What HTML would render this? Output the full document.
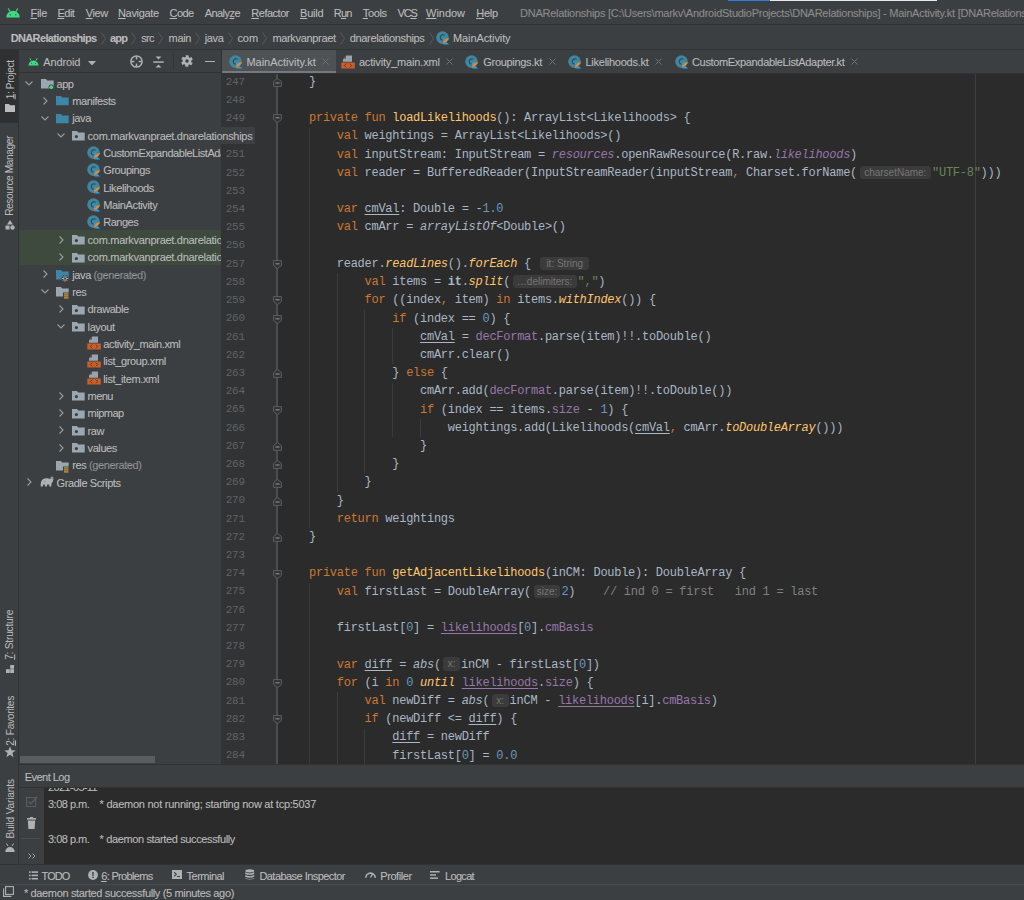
<!DOCTYPE html><html><head><meta charset="utf-8"><style>html,body{margin:0;padding:0;background:#3c3f41;overflow:hidden}u{text-decoration-thickness:1px}</style></head><body>
<div style="position:absolute;left:0;top:0;width:1024px;height:900px;background:#3c3f41;overflow:hidden">
<div style="position:absolute;left:0px;top:24px;width:1024px;height:1px;background:#323232;"></div>
<div style="position:absolute;left:728px;top:0px;width:42px;height:1px;background:#2f7bd8;"></div>
<div style="position:absolute;left:770px;top:0px;width:167px;height:1px;background:#e8e8e8;"></div>
<svg style="position:absolute;left:5px;top:8px" width="16" height="10" viewBox="0 0 16 10"><path d="M1.2 9.5 A6.8 6.8 0 0 1 14.8 9.5 Z" fill="#3ddc84"/><line x1="3.2" y1="0.5" x2="5" y2="3.5" stroke="#3ddc84" stroke-width="1.2"/><line x1="12.8" y1="0.5" x2="11" y2="3.5" stroke="#3ddc84" stroke-width="1.2"/><circle cx="5.2" cy="6.8" r="0.8" fill="#2f6e4d"/><circle cx="10.8" cy="6.8" r="0.8" fill="#2f6e4d"/></svg>
<div style="position:absolute;left:30.50px;top:6.65px;font-family:'Liberation Sans',sans-serif;font-size:11.0px;line-height:12.64px;color:#bbbbbb;white-space:pre;letter-spacing:-0.306px;-webkit-text-stroke:0.1px #bbbbbb;"><u style="text-underline-offset:0.8px">F</u>ile</div>
<div style="position:absolute;left:57.40px;top:6.65px;font-family:'Liberation Sans',sans-serif;font-size:11.0px;line-height:12.64px;color:#bbbbbb;white-space:pre;letter-spacing:-0.489px;-webkit-text-stroke:0.1px #bbbbbb;"><u style="text-underline-offset:0.8px">E</u>dit</div>
<div style="position:absolute;left:85.80px;top:6.65px;font-family:'Liberation Sans',sans-serif;font-size:11.0px;line-height:12.64px;color:#bbbbbb;white-space:pre;letter-spacing:-0.386px;-webkit-text-stroke:0.1px #bbbbbb;"><u style="text-underline-offset:0.8px">V</u>iew</div>
<div style="position:absolute;left:118.00px;top:6.65px;font-family:'Liberation Sans',sans-serif;font-size:11.0px;line-height:12.64px;color:#bbbbbb;white-space:pre;letter-spacing:-0.339px;-webkit-text-stroke:0.1px #bbbbbb;"><u style="text-underline-offset:0.8px">N</u>avigate</div>
<div style="position:absolute;left:169.60px;top:6.65px;font-family:'Liberation Sans',sans-serif;font-size:11.0px;line-height:12.64px;color:#bbbbbb;white-space:pre;letter-spacing:-0.599px;-webkit-text-stroke:0.1px #bbbbbb;"><u style="text-underline-offset:0.8px">C</u>ode</div>
<div style="position:absolute;left:204.70px;top:6.65px;font-family:'Liberation Sans',sans-serif;font-size:11.0px;line-height:12.64px;color:#bbbbbb;white-space:pre;letter-spacing:-0.548px;-webkit-text-stroke:0.1px #bbbbbb;">Analy<u style="text-underline-offset:0.8px">z</u>e</div>
<div style="position:absolute;left:251.30px;top:6.65px;font-family:'Liberation Sans',sans-serif;font-size:11.0px;line-height:12.64px;color:#bbbbbb;white-space:pre;letter-spacing:-0.484px;-webkit-text-stroke:0.1px #bbbbbb;"><u style="text-underline-offset:0.8px">R</u>efactor</div>
<div style="position:absolute;left:300.10px;top:6.65px;font-family:'Liberation Sans',sans-serif;font-size:11.0px;line-height:12.64px;color:#bbbbbb;white-space:pre;letter-spacing:-0.252px;-webkit-text-stroke:0.1px #bbbbbb;"><u style="text-underline-offset:0.8px">B</u>uild</div>
<div style="position:absolute;left:333.80px;top:6.65px;font-family:'Liberation Sans',sans-serif;font-size:11.0px;line-height:12.64px;color:#bbbbbb;white-space:pre;letter-spacing:-0.827px;-webkit-text-stroke:0.1px #bbbbbb;">R<u style="text-underline-offset:0.8px">u</u>n</div>
<div style="position:absolute;left:362.80px;top:6.65px;font-family:'Liberation Sans',sans-serif;font-size:11.0px;line-height:12.64px;color:#bbbbbb;white-space:pre;letter-spacing:-0.376px;-webkit-text-stroke:0.1px #bbbbbb;"><u style="text-underline-offset:0.8px">T</u>ools</div>
<div style="position:absolute;left:397.60px;top:6.65px;font-family:'Liberation Sans',sans-serif;font-size:11.0px;line-height:12.64px;color:#bbbbbb;white-space:pre;letter-spacing:-1.206px;-webkit-text-stroke:0.1px #bbbbbb;">VC<u style="text-underline-offset:0.8px">S</u></div>
<div style="position:absolute;left:426.10px;top:6.65px;font-family:'Liberation Sans',sans-serif;font-size:11.0px;line-height:12.64px;color:#bbbbbb;white-space:pre;letter-spacing:-0.054px;-webkit-text-stroke:0.1px #bbbbbb;"><u style="text-underline-offset:0.8px">W</u>indow</div>
<div style="position:absolute;left:476.20px;top:6.65px;font-family:'Liberation Sans',sans-serif;font-size:11.0px;line-height:12.64px;color:#bbbbbb;white-space:pre;letter-spacing:-0.256px;-webkit-text-stroke:0.1px #bbbbbb;"><u style="text-underline-offset:0.8px">H</u>elp</div>
<div style="position:absolute;left:520.00px;top:6.65px;font-family:'Liberation Sans',sans-serif;font-size:11.0px;line-height:12.64px;color:#8c8c8c;white-space:pre;letter-spacing:-0.253px;-webkit-text-stroke:0.1px #8c8c8c;">DNARelationships [C:\Users\markv\AndroidStudioProjects\DNARelationships] - MainActivity.kt [DNARelationships.app]</div>
<div style="position:absolute;left:0px;top:49px;width:1024px;height:1px;background:#323232;"></div>
<div style="position:absolute;left:10.70px;top:31.75px;font-family:'Liberation Sans',sans-serif;font-size:11.0px;line-height:12.64px;color:#bbbbbb;font-weight:bold;white-space:pre;letter-spacing:-0.635px;-webkit-text-stroke:0.1px #bbbbbb;">DNARelationships</div>
<svg style="position:absolute;left:100.5px;top:31.5px" width="6" height="13" viewBox="0 0 6 13"><path d="M0.5 0.5 L4.5 6.5 L0.5 12.5" fill="none" stroke="#57595b" stroke-width="1"/></svg>
<div style="position:absolute;left:110.00px;top:31.75px;font-family:'Liberation Sans',sans-serif;font-size:11.0px;line-height:12.64px;color:#bbbbbb;font-weight:bold;white-space:pre;letter-spacing:-0.852px;-webkit-text-stroke:0.1px #bbbbbb;">app</div>
<svg style="position:absolute;left:131.0px;top:31.5px" width="6" height="13" viewBox="0 0 6 13"><path d="M0.5 0.5 L4.5 6.5 L0.5 12.5" fill="none" stroke="#57595b" stroke-width="1"/></svg>
<div style="position:absolute;left:141.20px;top:31.75px;font-family:'Liberation Sans',sans-serif;font-size:11.0px;line-height:12.64px;color:#bbbbbb;white-space:pre;letter-spacing:-0.655px;-webkit-text-stroke:0.1px #bbbbbb;">src</div>
<svg style="position:absolute;left:157.9px;top:31.5px" width="6" height="13" viewBox="0 0 6 13"><path d="M0.5 0.5 L4.5 6.5 L0.5 12.5" fill="none" stroke="#57595b" stroke-width="1"/></svg>
<div style="position:absolute;left:168.60px;top:31.75px;font-family:'Liberation Sans',sans-serif;font-size:11.0px;line-height:12.64px;color:#bbbbbb;white-space:pre;letter-spacing:-0.361px;-webkit-text-stroke:0.1px #bbbbbb;">main</div>
<svg style="position:absolute;left:195.0px;top:31.5px" width="6" height="13" viewBox="0 0 6 13"><path d="M0.5 0.5 L4.5 6.5 L0.5 12.5" fill="none" stroke="#57595b" stroke-width="1"/></svg>
<div style="position:absolute;left:204.70px;top:31.75px;font-family:'Liberation Sans',sans-serif;font-size:11.0px;line-height:12.64px;color:#bbbbbb;white-space:pre;letter-spacing:-0.345px;-webkit-text-stroke:0.1px #bbbbbb;">java</div>
<svg style="position:absolute;left:227.5px;top:31.5px" width="6" height="13" viewBox="0 0 6 13"><path d="M0.5 0.5 L4.5 6.5 L0.5 12.5" fill="none" stroke="#57595b" stroke-width="1"/></svg>
<div style="position:absolute;left:237.40px;top:31.75px;font-family:'Liberation Sans',sans-serif;font-size:11.0px;line-height:12.64px;color:#bbbbbb;white-space:pre;letter-spacing:-0.060px;-webkit-text-stroke:0.1px #bbbbbb;">com</div>
<svg style="position:absolute;left:262.0px;top:31.5px" width="6" height="13" viewBox="0 0 6 13"><path d="M0.5 0.5 L4.5 6.5 L0.5 12.5" fill="none" stroke="#57595b" stroke-width="1"/></svg>
<div style="position:absolute;left:272.40px;top:31.75px;font-family:'Liberation Sans',sans-serif;font-size:11.0px;line-height:12.64px;color:#bbbbbb;white-space:pre;letter-spacing:-0.329px;-webkit-text-stroke:0.1px #bbbbbb;">markvanpraet</div>
<svg style="position:absolute;left:339.7px;top:31.5px" width="6" height="13" viewBox="0 0 6 13"><path d="M0.5 0.5 L4.5 6.5 L0.5 12.5" fill="none" stroke="#57595b" stroke-width="1"/></svg>
<div style="position:absolute;left:349.70px;top:31.75px;font-family:'Liberation Sans',sans-serif;font-size:11.0px;line-height:12.64px;color:#bbbbbb;white-space:pre;letter-spacing:-0.332px;-webkit-text-stroke:0.1px #bbbbbb;">dnarelationships</div>
<svg style="position:absolute;left:428.5px;top:31.5px" width="6" height="13" viewBox="0 0 6 13"><path d="M0.5 0.5 L4.5 6.5 L0.5 12.5" fill="none" stroke="#57595b" stroke-width="1"/></svg>
<svg style="position:absolute;left:436.2px;top:31.0px" width="14" height="14" viewBox="0 0 14 14"><circle cx="6.5" cy="6.6" r="6.3" fill="#40869f"/><path d="M8.6 4.4 A2.7 2.7 0 1 0 6.6 9.2" fill="none" stroke="#2c4a57" stroke-width="1.1"/><path d="M7 14 L7 7.2 L14 7.2 L14 14 Z" fill="#3c3f41" opacity="0"/><path d="M7.2 7.6 L9.6 7.6 L7.2 10 Z" fill="#1fa8f2"/><path d="M7.2 13.6 L7.2 10.6 L10.2 7.6 L13.4 7.6 Z" fill="#f08a1c"/><path d="M7.2 13.6 L7.2 11.2 L9 10.2 Z" fill="#d9608a"/><path d="M7.6 13.6 L10.3 10.9 L13.2 13.6 Z" fill="#1fa8f2"/></svg>
<div style="position:absolute;left:453.00px;top:31.75px;font-family:'Liberation Sans',sans-serif;font-size:11.0px;line-height:12.64px;color:#bbbbbb;white-space:pre;letter-spacing:-0.098px;-webkit-text-stroke:0.1px #bbbbbb;">MainActivity</div>
<div style="position:absolute;left:18px;top:50px;width:1px;height:814px;background:#323232;"></div>
<div style="position:absolute;left:0px;top:50px;width:18px;height:73px;background:#2e3031;"></div>
<div style="position:absolute;left:-9.05px;top:74.09px;width:38.90px;height:11.72px;font-family:'Liberation Sans',sans-serif;font-size:10.2px;line-height:11.72px;color:#bbbbbb;white-space:pre;letter-spacing:-0.419px;transform:rotate(-90deg);transform-origin:50% 50%"><u style="text-underline-offset:0.8px">1</u>: Project</div>
<svg style="position:absolute;left:5px;top:104px" width="10" height="8" viewBox="0 0 10 8"><path d="M0 0 L4 0 L5 1.2 L10 1.2 L10 8 L0 8 Z" fill="#bbbbbb"/></svg>
<div style="position:absolute;left:-29.60px;top:170.14px;width:80.00px;height:11.72px;font-family:'Liberation Sans',sans-serif;font-size:10.2px;line-height:11.72px;color:#bbbbbb;white-space:pre;letter-spacing:-0.422px;transform:rotate(-90deg);transform-origin:50% 50%">Resource Manager</div>
<svg style="position:absolute;left:5px;top:220px" width="10" height="10" viewBox="0 0 10 10"><path d="M5 0 L8 4.5 L2 4.5 Z" fill="#afb1b3"/><rect x="0.5" y="5.5" width="4" height="4" fill="#afb1b3"/><circle cx="7.5" cy="7.5" r="2.2" fill="#afb1b3"/></svg>
<div style="position:absolute;left:-14.60px;top:629.14px;width:50.00px;height:11.72px;font-family:'Liberation Sans',sans-serif;font-size:10.2px;line-height:11.72px;color:#bbbbbb;white-space:pre;letter-spacing:-0.227px;transform:rotate(-90deg);transform-origin:50% 50%"><u style="text-underline-offset:0.8px">7</u>: Structure</div>
<svg style="position:absolute;left:6px;top:665px" width="8" height="8" viewBox="0 0 8 8"><rect x="4.2" y="0" width="3.8" height="3.8" fill="#afb1b3"/><rect x="0" y="4.2" width="3.8" height="3.8" fill="#afb1b3"/><rect x="4.2" y="4.2" width="3.8" height="3.8" fill="#afb1b3"/></svg>
<div style="position:absolute;left:-14.50px;top:714.84px;width:49.80px;height:11.72px;font-family:'Liberation Sans',sans-serif;font-size:10.2px;line-height:11.72px;color:#bbbbbb;white-space:pre;letter-spacing:-0.291px;transform:rotate(-90deg);transform-origin:50% 50%"><u style="text-underline-offset:0.8px">2</u>: Favorites</div>
<svg style="position:absolute;left:4px;top:746px" width="12" height="12" viewBox="0 0 12 12"><path d="M6 0.3 L7.5 4.3 L11.7 4.4 L8.4 7 L9.6 11.3 L6 8.8 L2.4 11.3 L3.6 7 L0.3 4.4 L4.5 4.3 Z" fill="#afb1b3"/></svg>
<div style="position:absolute;left:-19.15px;top:803.39px;width:59.50px;height:11.72px;font-family:'Liberation Sans',sans-serif;font-size:10.2px;line-height:11.72px;color:#bbbbbb;white-space:pre;letter-spacing:-0.191px;transform:rotate(-90deg);transform-origin:50% 50%">Build Variants</div>
<svg style="position:absolute;left:5px;top:843px" width="10" height="9" viewBox="0 0 10 9"><path d="M0.3 9 A4.7 5 0 0 1 9.7 9 Z" fill="#afb1b3"/><line x1="1.5" y1="0.5" x2="3" y2="3" stroke="#afb1b3" stroke-width="1"/><line x1="8.5" y1="0.5" x2="7" y2="3" stroke="#afb1b3" stroke-width="1"/></svg>
<div style="position:absolute;left:0px;top:864px;width:18px;height:1px;background:#323232;"></div>
<div style="position:absolute;left:19px;top:72px;width:202px;height:1px;background:#323232;"></div>
<svg style="position:absolute;left:27.5px;top:57.5px" width="11" height="8" viewBox="0 0 11 8"><path d="M0.5 7.6 A5 5.2 0 0 1 10.5 7.6 Z" fill="#3ddc84"/><line x1="1.8" y1="0.3" x2="3.2" y2="2.6" stroke="#3ddc84" stroke-width="1"/><line x1="9.2" y1="0.3" x2="7.8" y2="2.6" stroke="#3ddc84" stroke-width="1"/><circle cx="3.6" cy="5.3" r="0.6" fill="#2f6e4d"/><circle cx="7.4" cy="5.3" r="0.6" fill="#2f6e4d"/></svg>
<div style="position:absolute;left:43.30px;top:55.64px;font-family:'Liberation Sans',sans-serif;font-size:11.0px;line-height:12.64px;color:#bbbbbb;white-space:pre;letter-spacing:-0.145px;-webkit-text-stroke:0.1px #bbbbbb;">Android</div>
<svg style="position:absolute;left:88px;top:60.5px" width="8" height="4.5" viewBox="0 0 8 4.5"><path d="M0 0 L8 0 L4 4.5 Z" fill="#afb1b3"/></svg>
<svg style="position:absolute;left:129.6px;top:54.8px" width="13" height="13" viewBox="0 0 13 13"><circle cx="6.5" cy="6.5" r="5.6" fill="none" stroke="#afb1b3" stroke-width="1.5"/><path d="M6.5 1.5 V4.4 M6.5 8.6 V11.5 M1.5 6.5 H4.4 M8.6 6.5 H11.5" stroke="#afb1b3" stroke-width="1.5"/></svg>
<svg style="position:absolute;left:153px;top:55.5px" width="11" height="12" viewBox="0 0 11 12"><path d="M2.6 0.5 L8.4 0.5 L5.5 3.4 Z M2.6 11.5 L8.4 11.5 L5.5 8.6 Z" fill="#afb1b3"/><rect x="0.3" y="5.3" width="10.4" height="1.5" fill="#afb1b3"/></svg>
<div style="position:absolute;left:172.5px;top:53px;width:1px;height:17px;background:#333537;"></div>
<svg style="position:absolute;left:181.2px;top:55.3px" width="12" height="12" viewBox="0 0 12 12"><path d="M4.55 0.18 L7.45 0.18 L7.88 2.14 L9.09 3.01 L10.32 1.83 L11.77 4.35 L10.29 5.70 L10.13 7.19 L11.77 7.65 L10.32 10.17 L8.40 9.56 L7.04 10.17 L7.45 11.82 L4.55 11.82 L4.12 9.86 L2.91 8.99 L1.68 10.17 L0.23 7.65 L1.71 6.30 L1.87 4.81 L0.23 4.35 L1.68 1.83 L3.60 2.44 L4.96 1.83 Z" fill="#afb1b3"/><circle cx="6" cy="6" r="1.7" fill="#3c3f41"/></svg>
<div style="position:absolute;left:204.6px;top:60.6px;width:10.4px;height:1.5px;background:#afb1b3;"></div>
<div style="position:absolute;left:19px;top:230.3px;width:202px;height:34.7px;background:#3e4a3e;"></div>
<div style="position:absolute;left:20px;top:73px;width:201px;height:691px;overflow:hidden">
<svg style="position:absolute;left:5.2px;top:7.9px" width="8" height="5" viewBox="0 0 8 5"><path d="M0.5 0.5 L4 4 L7.5 0.5" fill="none" stroke="#9a9da0" stroke-width="1.1"/></svg>
<svg style="position:absolute;left:20.5px;top:6.0px" width="13" height="11" viewBox="0 0 13 11"><path d="M0 0 L5 0 L6.2 1.5 L12.7 1.5 L12.7 9.4 L0 9.4 Z" fill="#9aa7b0"/><circle cx="10.2" cy="8.2" r="2.6" fill="#3c3f41"/><circle cx="10.2" cy="8.2" r="1.9" fill="#3ddc84"/></svg>
<div style="position:absolute;left:36.50px;top:4.64px;font-family:'Liberation Sans',sans-serif;font-size:11.0px;line-height:12.64px;color:#bbbbbb;white-space:pre;letter-spacing:-0.489px;-webkit-text-stroke:0.1px #bbbbbb;">app</div>
<svg style="position:absolute;left:22.7px;top:23.7px" width="5" height="8" viewBox="0 0 5 8"><path d="M0.5 0.5 L4 4 L0.5 7.5" fill="none" stroke="#9a9da0" stroke-width="1.1"/></svg>
<svg style="position:absolute;left:36.2px;top:23.3px" width="13" height="10" viewBox="0 0 13 10"><path d="M0 0 L5 0 L6.2 1.5 L12.7 1.5 L12.7 9.3 L0 9.3 Z" fill="#3c87a8"/></svg>
<div style="position:absolute;left:52.30px;top:21.99px;font-family:'Liberation Sans',sans-serif;font-size:11.0px;line-height:12.64px;color:#bbbbbb;white-space:pre;letter-spacing:-0.418px;-webkit-text-stroke:0.1px #bbbbbb;">manifests</div>
<svg style="position:absolute;left:21.2px;top:42.6px" width="8" height="5" viewBox="0 0 8 5"><path d="M0.5 0.5 L4 4 L7.5 0.5" fill="none" stroke="#9a9da0" stroke-width="1.1"/></svg>
<svg style="position:absolute;left:36.2px;top:40.7px" width="13" height="10" viewBox="0 0 13 10"><path d="M0 0 L5 0 L6.2 1.5 L12.7 1.5 L12.7 9.3 L0 9.3 Z" fill="#3c87a8"/></svg>
<div style="position:absolute;left:52.30px;top:39.34px;font-family:'Liberation Sans',sans-serif;font-size:11.0px;line-height:12.64px;color:#bbbbbb;white-space:pre;letter-spacing:-0.404px;-webkit-text-stroke:0.1px #bbbbbb;">java</div>
<svg style="position:absolute;left:37.0px;top:60.0px" width="8" height="5" viewBox="0 0 8 5"><path d="M0.5 0.5 L4 4 L7.5 0.5" fill="none" stroke="#9a9da0" stroke-width="1.1"/></svg>
<svg style="position:absolute;left:52.0px;top:58.1px" width="13" height="10" viewBox="0 0 13 10"><path d="M0 0 L5 0 L6.2 1.5 L12.7 1.5 L12.7 9.6 L0 9.6 Z" fill="#9aa7b0"/><circle cx="4.4" cy="5.6" r="1.6" fill="#3c3f41"/></svg>
<div style="position:absolute;left:67.60px;top:56.70px;font-family:'Liberation Sans',sans-serif;font-size:11.0px;line-height:12.64px;color:#bbbbbb;white-space:pre;letter-spacing:-0.287px;-webkit-text-stroke:0.1px #bbbbbb;">com.markvanpraet.dnarelationships</div>
<svg style="position:absolute;left:67.3px;top:72.7px" width="14" height="14" viewBox="0 0 14 14"><circle cx="6.5" cy="6.6" r="6.3" fill="#40869f"/><path d="M8.6 4.4 A2.7 2.7 0 1 0 6.6 9.2" fill="none" stroke="#2c4a57" stroke-width="1.1"/><path d="M7 14 L7 7.2 L14 7.2 L14 14 Z" fill="#3c3f41" opacity="0"/><path d="M7.2 7.6 L9.6 7.6 L7.2 10 Z" fill="#1fa8f2"/><path d="M7.2 13.6 L7.2 10.6 L10.2 7.6 L13.4 7.6 Z" fill="#f08a1c"/><path d="M7.2 13.6 L7.2 11.2 L9 10.2 Z" fill="#d9608a"/><path d="M7.6 13.6 L10.3 10.9 L13.2 13.6 Z" fill="#1fa8f2"/></svg>
<div style="position:absolute;left:83.30px;top:74.05px;font-family:'Liberation Sans',sans-serif;font-size:11.0px;line-height:12.64px;color:#bbbbbb;white-space:pre;letter-spacing:-0.449px;-webkit-text-stroke:0.1px #bbbbbb;">CustomExpandableListAdapter</div>
<svg style="position:absolute;left:67.3px;top:90.0px" width="14" height="14" viewBox="0 0 14 14"><circle cx="6.5" cy="6.6" r="6.3" fill="#40869f"/><path d="M8.6 4.4 A2.7 2.7 0 1 0 6.6 9.2" fill="none" stroke="#2c4a57" stroke-width="1.1"/><path d="M7 14 L7 7.2 L14 7.2 L14 14 Z" fill="#3c3f41" opacity="0"/><path d="M7.2 7.6 L9.6 7.6 L7.2 10 Z" fill="#1fa8f2"/><path d="M7.2 13.6 L7.2 10.6 L10.2 7.6 L13.4 7.6 Z" fill="#f08a1c"/><path d="M7.2 13.6 L7.2 11.2 L9 10.2 Z" fill="#d9608a"/><path d="M7.6 13.6 L10.3 10.9 L13.2 13.6 Z" fill="#1fa8f2"/></svg>
<div style="position:absolute;left:83.30px;top:91.39px;font-family:'Liberation Sans',sans-serif;font-size:11.0px;line-height:12.64px;color:#bbbbbb;white-space:pre;letter-spacing:-0.451px;-webkit-text-stroke:0.1px #bbbbbb;">Groupings</div>
<svg style="position:absolute;left:67.3px;top:107.4px" width="14" height="14" viewBox="0 0 14 14"><circle cx="6.5" cy="6.6" r="6.3" fill="#40869f"/><path d="M8.6 4.4 A2.7 2.7 0 1 0 6.6 9.2" fill="none" stroke="#2c4a57" stroke-width="1.1"/><path d="M7 14 L7 7.2 L14 7.2 L14 14 Z" fill="#3c3f41" opacity="0"/><path d="M7.2 7.6 L9.6 7.6 L7.2 10 Z" fill="#1fa8f2"/><path d="M7.2 13.6 L7.2 10.6 L10.2 7.6 L13.4 7.6 Z" fill="#f08a1c"/><path d="M7.2 13.6 L7.2 11.2 L9 10.2 Z" fill="#d9608a"/><path d="M7.6 13.6 L10.3 10.9 L13.2 13.6 Z" fill="#1fa8f2"/></svg>
<div style="position:absolute;left:83.30px;top:108.74px;font-family:'Liberation Sans',sans-serif;font-size:11.0px;line-height:12.64px;color:#bbbbbb;white-space:pre;letter-spacing:-0.400px;-webkit-text-stroke:0.1px #bbbbbb;">Likelihoods</div>
<svg style="position:absolute;left:67.3px;top:124.8px" width="14" height="14" viewBox="0 0 14 14"><circle cx="6.5" cy="6.6" r="6.3" fill="#40869f"/><path d="M8.6 4.4 A2.7 2.7 0 1 0 6.6 9.2" fill="none" stroke="#2c4a57" stroke-width="1.1"/><path d="M7 14 L7 7.2 L14 7.2 L14 14 Z" fill="#3c3f41" opacity="0"/><path d="M7.2 7.6 L9.6 7.6 L7.2 10 Z" fill="#1fa8f2"/><path d="M7.2 13.6 L7.2 10.6 L10.2 7.6 L13.4 7.6 Z" fill="#f08a1c"/><path d="M7.2 13.6 L7.2 11.2 L9 10.2 Z" fill="#d9608a"/><path d="M7.6 13.6 L10.3 10.9 L13.2 13.6 Z" fill="#1fa8f2"/></svg>
<div style="position:absolute;left:83.30px;top:126.10px;font-family:'Liberation Sans',sans-serif;font-size:11.0px;line-height:12.64px;color:#bbbbbb;white-space:pre;letter-spacing:-0.391px;-webkit-text-stroke:0.1px #bbbbbb;">MainActivity</div>
<svg style="position:absolute;left:67.3px;top:142.1px" width="14" height="14" viewBox="0 0 14 14"><circle cx="6.5" cy="6.6" r="6.3" fill="#40869f"/><path d="M8.6 4.4 A2.7 2.7 0 1 0 6.6 9.2" fill="none" stroke="#2c4a57" stroke-width="1.1"/><path d="M7 14 L7 7.2 L14 7.2 L14 14 Z" fill="#3c3f41" opacity="0"/><path d="M7.2 7.6 L9.6 7.6 L7.2 10 Z" fill="#1fa8f2"/><path d="M7.2 13.6 L7.2 10.6 L10.2 7.6 L13.4 7.6 Z" fill="#f08a1c"/><path d="M7.2 13.6 L7.2 11.2 L9 10.2 Z" fill="#d9608a"/><path d="M7.6 13.6 L10.3 10.9 L13.2 13.6 Z" fill="#1fa8f2"/></svg>
<div style="position:absolute;left:83.30px;top:143.44px;font-family:'Liberation Sans',sans-serif;font-size:11.0px;line-height:12.64px;color:#bbbbbb;white-space:pre;letter-spacing:-0.506px;-webkit-text-stroke:0.1px #bbbbbb;">Ranges</div>
<svg style="position:absolute;left:38.5px;top:162.6px" width="5" height="8" viewBox="0 0 5 8"><path d="M0.5 0.5 L4 4 L0.5 7.5" fill="none" stroke="#9a9da0" stroke-width="1.1"/></svg>
<svg style="position:absolute;left:52.0px;top:162.2px" width="13" height="10" viewBox="0 0 13 10"><path d="M0 0 L5 0 L6.2 1.5 L12.7 1.5 L12.7 9.6 L0 9.6 Z" fill="#9aa7b0"/><circle cx="4.4" cy="5.6" r="1.6" fill="#3c3f41"/></svg>
<div style="position:absolute;left:67.60px;top:160.79px;font-family:'Liberation Sans',sans-serif;font-size:11.0px;line-height:12.64px;color:#bbbbbb;white-space:pre;letter-spacing:-0.287px;-webkit-text-stroke:0.1px #bbbbbb;">com.markvanpraet.dnarelationships</div>
<svg style="position:absolute;left:38.5px;top:179.9px" width="5" height="8" viewBox="0 0 5 8"><path d="M0.5 0.5 L4 4 L0.5 7.5" fill="none" stroke="#9a9da0" stroke-width="1.1"/></svg>
<svg style="position:absolute;left:52.0px;top:179.5px" width="13" height="10" viewBox="0 0 13 10"><path d="M0 0 L5 0 L6.2 1.5 L12.7 1.5 L12.7 9.6 L0 9.6 Z" fill="#9aa7b0"/><circle cx="4.4" cy="5.6" r="1.6" fill="#3c3f41"/></svg>
<div style="position:absolute;left:67.60px;top:178.15px;font-family:'Liberation Sans',sans-serif;font-size:11.0px;line-height:12.64px;color:#bbbbbb;white-space:pre;letter-spacing:-0.287px;-webkit-text-stroke:0.1px #bbbbbb;">com.markvanpraet.dnarelationships</div>
<svg style="position:absolute;left:22.7px;top:197.3px" width="5" height="8" viewBox="0 0 5 8"><path d="M0.5 0.5 L4 4 L0.5 7.5" fill="none" stroke="#9a9da0" stroke-width="1.1"/></svg>
<svg style="position:absolute;left:36.2px;top:196.9px" width="13" height="12" viewBox="0 0 13 12"><path d="M0 0 L5 0 L6.2 1.5 L12.7 1.5 L12.7 9.4 L0 9.4 Z" fill="#3c87a8"/><circle cx="9" cy="8.5" r="3.6" fill="#3c3f41"/><path d="M9 5.3 V11.7 M5.8 8.5 H12.2 M6.8 6.3 L11.2 10.7 M11.2 6.3 L6.8 10.7" stroke="#afb1b3" stroke-width="1"/><circle cx="9" cy="8.5" r="1" fill="#3c3f41"/></svg>
<div style="position:absolute;left:52.30px;top:195.50px;font-family:'Liberation Sans',sans-serif;font-size:11.0px;line-height:12.64px;color:#bbbbbb;white-space:pre;letter-spacing:-0.401px;-webkit-text-stroke:0.1px #bbbbbb;">java<span style="color:#868a8e"> (generated)</span></div>
<svg style="position:absolute;left:21.2px;top:216.1px" width="8" height="5" viewBox="0 0 8 5"><path d="M0.5 0.5 L4 4 L7.5 0.5" fill="none" stroke="#9a9da0" stroke-width="1.1"/></svg>
<svg style="position:absolute;left:36.2px;top:214.2px" width="13" height="12" viewBox="0 0 13 12"><path d="M0 0 L5 0 L6.2 1.5 L12.7 1.5 L12.7 9.4 L0 9.4 Z" fill="#9aa7b0"/><rect x="7" y="5.5" width="6" height="6.5" fill="#3c3f41"/><rect x="8" y="6.3" width="4.5" height="1.2" fill="#d8a23a"/><rect x="8" y="8.3" width="4.5" height="1.2" fill="#d8a23a"/><rect x="8" y="10.3" width="4.5" height="1.2" fill="#d8a23a"/></svg>
<div style="position:absolute;left:52.30px;top:212.84px;font-family:'Liberation Sans',sans-serif;font-size:11.0px;line-height:12.64px;color:#bbbbbb;white-space:pre;letter-spacing:-0.408px;-webkit-text-stroke:0.1px #bbbbbb;">res</div>
<svg style="position:absolute;left:38.5px;top:231.9px" width="5" height="8" viewBox="0 0 5 8"><path d="M0.5 0.5 L4 4 L0.5 7.5" fill="none" stroke="#9a9da0" stroke-width="1.1"/></svg>
<svg style="position:absolute;left:52.0px;top:231.5px" width="13" height="10" viewBox="0 0 13 10"><path d="M0 0 L5 0 L6.2 1.5 L12.7 1.5 L12.7 9.6 L0 9.6 Z" fill="#9aa7b0"/><circle cx="4.4" cy="5.6" r="1.6" fill="#3c3f41"/></svg>
<div style="position:absolute;left:67.60px;top:230.19px;font-family:'Liberation Sans',sans-serif;font-size:11.0px;line-height:12.64px;color:#bbbbbb;white-space:pre;letter-spacing:-0.446px;-webkit-text-stroke:0.1px #bbbbbb;">drawable</div>
<svg style="position:absolute;left:37.0px;top:250.8px" width="8" height="5" viewBox="0 0 8 5"><path d="M0.5 0.5 L4 4 L7.5 0.5" fill="none" stroke="#9a9da0" stroke-width="1.1"/></svg>
<svg style="position:absolute;left:52.0px;top:248.9px" width="13" height="10" viewBox="0 0 13 10"><path d="M0 0 L5 0 L6.2 1.5 L12.7 1.5 L12.7 9.6 L0 9.6 Z" fill="#9aa7b0"/><circle cx="4.4" cy="5.6" r="1.6" fill="#3c3f41"/></svg>
<div style="position:absolute;left:67.60px;top:247.54px;font-family:'Liberation Sans',sans-serif;font-size:11.0px;line-height:12.64px;color:#bbbbbb;white-space:pre;letter-spacing:-0.391px;-webkit-text-stroke:0.1px #bbbbbb;">layout</div>
<svg style="position:absolute;left:67.0px;top:263.2px" width="14" height="14" viewBox="0 0 14 14"><path d="M2 4.3 L5.3 0.6 L11 0.6 L11 6.7 L2 6.7 Z" fill="#9aa3ab"/><path d="M2.6 3.6 L4.8 1.3 L4.8 3.6 Z" fill="#3c3f41"/><rect x="0.3" y="7.5" width="13.5" height="6" fill="#c75f2c"/><path d="M5.2 8.6 L3.4 10.5 L5.2 12.4 M8.8 8.6 L10.6 10.5 L8.8 12.4" fill="none" stroke="#6e3519" stroke-width="1"/></svg>
<div style="position:absolute;left:83.30px;top:264.90px;font-family:'Liberation Sans',sans-serif;font-size:11.0px;line-height:12.64px;color:#bbbbbb;white-space:pre;letter-spacing:-0.394px;-webkit-text-stroke:0.1px #bbbbbb;">activity_main.xml</div>
<svg style="position:absolute;left:67.0px;top:280.5px" width="14" height="14" viewBox="0 0 14 14"><path d="M2 4.3 L5.3 0.6 L11 0.6 L11 6.7 L2 6.7 Z" fill="#9aa3ab"/><path d="M2.6 3.6 L4.8 1.3 L4.8 3.6 Z" fill="#3c3f41"/><rect x="0.3" y="7.5" width="13.5" height="6" fill="#c75f2c"/><path d="M5.2 8.6 L3.4 10.5 L5.2 12.4 M8.8 8.6 L10.6 10.5 L8.8 12.4" fill="none" stroke="#6e3519" stroke-width="1"/></svg>
<div style="position:absolute;left:83.30px;top:282.25px;font-family:'Liberation Sans',sans-serif;font-size:11.0px;line-height:12.64px;color:#bbbbbb;white-space:pre;letter-spacing:-0.388px;-webkit-text-stroke:0.1px #bbbbbb;">list_group.xml</div>
<svg style="position:absolute;left:67.0px;top:297.9px" width="14" height="14" viewBox="0 0 14 14"><path d="M2 4.3 L5.3 0.6 L11 0.6 L11 6.7 L2 6.7 Z" fill="#9aa3ab"/><path d="M2.6 3.6 L4.8 1.3 L4.8 3.6 Z" fill="#3c3f41"/><rect x="0.3" y="7.5" width="13.5" height="6" fill="#c75f2c"/><path d="M5.2 8.6 L3.4 10.5 L5.2 12.4 M8.8 8.6 L10.6 10.5 L8.8 12.4" fill="none" stroke="#6e3519" stroke-width="1"/></svg>
<div style="position:absolute;left:83.30px;top:299.60px;font-family:'Liberation Sans',sans-serif;font-size:11.0px;line-height:12.64px;color:#bbbbbb;white-space:pre;letter-spacing:-0.372px;-webkit-text-stroke:0.1px #bbbbbb;">list_item.xml</div>
<svg style="position:absolute;left:38.5px;top:318.7px" width="5" height="8" viewBox="0 0 5 8"><path d="M0.5 0.5 L4 4 L0.5 7.5" fill="none" stroke="#9a9da0" stroke-width="1.1"/></svg>
<svg style="position:absolute;left:52.0px;top:318.3px" width="13" height="10" viewBox="0 0 13 10"><path d="M0 0 L5 0 L6.2 1.5 L12.7 1.5 L12.7 9.6 L0 9.6 Z" fill="#9aa7b0"/><circle cx="4.4" cy="5.6" r="1.6" fill="#3c3f41"/></svg>
<div style="position:absolute;left:67.60px;top:316.94px;font-family:'Liberation Sans',sans-serif;font-size:11.0px;line-height:12.64px;color:#bbbbbb;white-space:pre;letter-spacing:-0.550px;-webkit-text-stroke:0.1px #bbbbbb;">menu</div>
<svg style="position:absolute;left:38.5px;top:336.1px" width="5" height="8" viewBox="0 0 5 8"><path d="M0.5 0.5 L4 4 L0.5 7.5" fill="none" stroke="#9a9da0" stroke-width="1.1"/></svg>
<svg style="position:absolute;left:52.0px;top:335.7px" width="13" height="10" viewBox="0 0 13 10"><path d="M0 0 L5 0 L6.2 1.5 L12.7 1.5 L12.7 9.6 L0 9.6 Z" fill="#9aa7b0"/><circle cx="4.4" cy="5.6" r="1.6" fill="#3c3f41"/></svg>
<div style="position:absolute;left:67.60px;top:334.30px;font-family:'Liberation Sans',sans-serif;font-size:11.0px;line-height:12.64px;color:#bbbbbb;white-space:pre;letter-spacing:-0.522px;-webkit-text-stroke:0.1px #bbbbbb;">mipmap</div>
<svg style="position:absolute;left:38.5px;top:353.4px" width="5" height="8" viewBox="0 0 5 8"><path d="M0.5 0.5 L4 4 L0.5 7.5" fill="none" stroke="#9a9da0" stroke-width="1.1"/></svg>
<svg style="position:absolute;left:52.0px;top:353.0px" width="13" height="10" viewBox="0 0 13 10"><path d="M0 0 L5 0 L6.2 1.5 L12.7 1.5 L12.7 9.6 L0 9.6 Z" fill="#9aa7b0"/><circle cx="4.4" cy="5.6" r="1.6" fill="#3c3f41"/></svg>
<div style="position:absolute;left:67.60px;top:351.65px;font-family:'Liberation Sans',sans-serif;font-size:11.0px;line-height:12.64px;color:#bbbbbb;white-space:pre;letter-spacing:-0.473px;-webkit-text-stroke:0.1px #bbbbbb;">raw</div>
<svg style="position:absolute;left:38.5px;top:370.8px" width="5" height="8" viewBox="0 0 5 8"><path d="M0.5 0.5 L4 4 L0.5 7.5" fill="none" stroke="#9a9da0" stroke-width="1.1"/></svg>
<svg style="position:absolute;left:52.0px;top:370.4px" width="13" height="10" viewBox="0 0 13 10"><path d="M0 0 L5 0 L6.2 1.5 L12.7 1.5 L12.7 9.6 L0 9.6 Z" fill="#9aa7b0"/><circle cx="4.4" cy="5.6" r="1.6" fill="#3c3f41"/></svg>
<div style="position:absolute;left:67.60px;top:369.00px;font-family:'Liberation Sans',sans-serif;font-size:11.0px;line-height:12.64px;color:#bbbbbb;white-space:pre;letter-spacing:-0.424px;-webkit-text-stroke:0.1px #bbbbbb;">values</div>
<svg style="position:absolute;left:36.2px;top:387.7px" width="13" height="12" viewBox="0 0 13 12"><path d="M0 0 L5 0 L6.2 1.5 L12.7 1.5 L12.7 9.4 L0 9.4 Z" fill="#9aa7b0"/><rect x="7" y="5.5" width="6" height="6.5" fill="#3c3f41"/><rect x="8" y="6.3" width="4.5" height="1.2" fill="#d8a23a"/><rect x="8" y="8.3" width="4.5" height="1.2" fill="#d8a23a"/><rect x="8" y="10.3" width="4.5" height="1.2" fill="#d8a23a"/></svg>
<div style="position:absolute;left:52.30px;top:386.35px;font-family:'Liberation Sans',sans-serif;font-size:11.0px;line-height:12.64px;color:#bbbbbb;white-space:pre;letter-spacing:-0.401px;-webkit-text-stroke:0.1px #bbbbbb;">res<span style="color:#868a8e"> (generated)</span></div>
<svg style="position:absolute;left:6.7px;top:405.4px" width="5" height="8" viewBox="0 0 5 8"><path d="M0.5 0.5 L4 4 L0.5 7.5" fill="none" stroke="#9a9da0" stroke-width="1.1"/></svg>
<svg style="position:absolute;left:20.1px;top:403.3px" width="14" height="11" viewBox="0 0 14 11"><path d="M0.6 10.4 L0.9 6.8 Q1.5 2.6 6 2.3 Q9 2.1 10.2 3.3 Q10.6 0.2 12.3 0.5 Q13.7 0.9 13.4 3.2 Q13 5.8 11.6 7.2 L11.2 10.4 L9.4 10.4 L9.1 8.6 L7.2 8.6 L6.9 10.4 L5 10.4 L4.8 8.6 L3.2 8.6 L2.8 10.4 Z" fill="#b0b2b4"/><path d="M11.4 2.4 Q12 1.2 12.6 2.2" fill="none" stroke="#3c3f41" stroke-width="0.9"/><path d="M3.6 5.2 Q4.6 6.3 5.8 5" fill="none" stroke="#7c7e80" stroke-width="0.7"/></svg>
<div style="position:absolute;left:36.50px;top:403.69px;font-family:'Liberation Sans',sans-serif;font-size:11.0px;line-height:12.64px;color:#bbbbbb;white-space:pre;letter-spacing:-0.398px;-webkit-text-stroke:0.1px #bbbbbb;">Gradle Scripts</div>
</div>
<div style="position:absolute;left:19.5px;top:756px;width:135px;height:7px;background:#5a5d5f;"></div>
<div style="position:absolute;left:221px;top:50px;width:1px;height:714px;background:#323232;"></div>
<div style="position:absolute;left:222px;top:50px;width:114px;height:21px;background:#4e5254;"></div>
<div style="position:absolute;left:222px;top:71px;width:114px;height:2.5px;background:#747a80;"></div>
<div style="position:absolute;left:222px;top:73px;width:802px;height:0.5px;background:#323232;"></div>
<svg style="position:absolute;left:229.2px;top:55.0px" width="14" height="14" viewBox="0 0 14 14"><circle cx="6.5" cy="6.6" r="6.3" fill="#40869f"/><path d="M8.6 4.4 A2.7 2.7 0 1 0 6.6 9.2" fill="none" stroke="#2c4a57" stroke-width="1.1"/><path d="M7 14 L7 7.2 L14 7.2 L14 14 Z" fill="#3c3f41" opacity="0"/><path d="M7.2 7.6 L9.6 7.6 L7.2 10 Z" fill="#1fa8f2"/><path d="M7.2 13.6 L7.2 10.6 L10.2 7.6 L13.4 7.6 Z" fill="#f08a1c"/><path d="M7.2 13.6 L7.2 11.2 L9 10.2 Z" fill="#d9608a"/><path d="M7.6 13.6 L10.3 10.9 L13.2 13.6 Z" fill="#1fa8f2"/></svg>
<div style="position:absolute;left:246.40px;top:56.34px;font-family:'Liberation Sans',sans-serif;font-size:11.0px;line-height:12.64px;color:#bbbbbb;white-space:pre;letter-spacing:-0.005px;-webkit-text-stroke:0.1px #bbbbbb;">MainActivity.kt</div>
<svg style="position:absolute;left:322.0px;top:58px" width="7" height="7" viewBox="0 0 7 7"><path d="M0.5 0.5 L6.5 6.5 M6.5 0.5 L0.5 6.5" stroke="#6e7173" stroke-width="1"/></svg>
<svg style="position:absolute;left:341.4px;top:54.6px" width="14" height="14" viewBox="0 0 14 14"><path d="M2 4.3 L5.3 0.6 L11 0.6 L11 6.7 L2 6.7 Z" fill="#9aa3ab"/><path d="M2.6 3.6 L4.8 1.3 L4.8 3.6 Z" fill="#3c3f41"/><rect x="0.3" y="7.5" width="13.5" height="6" fill="#c75f2c"/><path d="M5.2 8.6 L3.4 10.5 L5.2 12.4 M8.8 8.6 L10.6 10.5 L8.8 12.4" fill="none" stroke="#6e3519" stroke-width="1"/></svg>
<div style="position:absolute;left:358.90px;top:56.34px;font-family:'Liberation Sans',sans-serif;font-size:11.0px;line-height:12.64px;color:#bbbbbb;white-space:pre;letter-spacing:-0.167px;-webkit-text-stroke:0.1px #bbbbbb;">activity_main.xml</div>
<svg style="position:absolute;left:445.8px;top:58px" width="7" height="7" viewBox="0 0 7 7"><path d="M0.5 0.5 L6.5 6.5 M6.5 0.5 L0.5 6.5" stroke="#6e7173" stroke-width="1"/></svg>
<svg style="position:absolute;left:465.2px;top:55.0px" width="14" height="14" viewBox="0 0 14 14"><circle cx="6.5" cy="6.6" r="6.3" fill="#40869f"/><path d="M8.6 4.4 A2.7 2.7 0 1 0 6.6 9.2" fill="none" stroke="#2c4a57" stroke-width="1.1"/><path d="M7 14 L7 7.2 L14 7.2 L14 14 Z" fill="#3c3f41" opacity="0"/><path d="M7.2 7.6 L9.6 7.6 L7.2 10 Z" fill="#1fa8f2"/><path d="M7.2 13.6 L7.2 10.6 L10.2 7.6 L13.4 7.6 Z" fill="#f08a1c"/><path d="M7.2 13.6 L7.2 11.2 L9 10.2 Z" fill="#d9608a"/><path d="M7.6 13.6 L10.3 10.9 L13.2 13.6 Z" fill="#1fa8f2"/></svg>
<div style="position:absolute;left:483.30px;top:56.34px;font-family:'Liberation Sans',sans-serif;font-size:11.0px;line-height:12.64px;color:#bbbbbb;white-space:pre;letter-spacing:-0.305px;-webkit-text-stroke:0.1px #bbbbbb;">Groupings.kt</div>
<svg style="position:absolute;left:549.0px;top:58px" width="7" height="7" viewBox="0 0 7 7"><path d="M0.5 0.5 L6.5 6.5 M6.5 0.5 L0.5 6.5" stroke="#6e7173" stroke-width="1"/></svg>
<svg style="position:absolute;left:568.0px;top:55.0px" width="14" height="14" viewBox="0 0 14 14"><circle cx="6.5" cy="6.6" r="6.3" fill="#40869f"/><path d="M8.6 4.4 A2.7 2.7 0 1 0 6.6 9.2" fill="none" stroke="#2c4a57" stroke-width="1.1"/><path d="M7 14 L7 7.2 L14 7.2 L14 14 Z" fill="#3c3f41" opacity="0"/><path d="M7.2 7.6 L9.6 7.6 L7.2 10 Z" fill="#1fa8f2"/><path d="M7.2 13.6 L7.2 10.6 L10.2 7.6 L13.4 7.6 Z" fill="#f08a1c"/><path d="M7.2 13.6 L7.2 11.2 L9 10.2 Z" fill="#d9608a"/><path d="M7.6 13.6 L10.3 10.9 L13.2 13.6 Z" fill="#1fa8f2"/></svg>
<div style="position:absolute;left:585.50px;top:56.34px;font-family:'Liberation Sans',sans-serif;font-size:11.0px;line-height:12.64px;color:#bbbbbb;white-space:pre;letter-spacing:-0.261px;-webkit-text-stroke:0.1px #bbbbbb;">Likelihoods.kt</div>
<svg style="position:absolute;left:654.5px;top:58px" width="7" height="7" viewBox="0 0 7 7"><path d="M0.5 0.5 L6.5 6.5 M6.5 0.5 L0.5 6.5" stroke="#6e7173" stroke-width="1"/></svg>
<svg style="position:absolute;left:675.0px;top:55.0px" width="14" height="14" viewBox="0 0 14 14"><circle cx="6.5" cy="6.6" r="6.3" fill="#40869f"/><path d="M8.6 4.4 A2.7 2.7 0 1 0 6.6 9.2" fill="none" stroke="#2c4a57" stroke-width="1.1"/><path d="M7 14 L7 7.2 L14 7.2 L14 14 Z" fill="#3c3f41" opacity="0"/><path d="M7.2 7.6 L9.6 7.6 L7.2 10 Z" fill="#1fa8f2"/><path d="M7.2 13.6 L7.2 10.6 L10.2 7.6 L13.4 7.6 Z" fill="#f08a1c"/><path d="M7.2 13.6 L7.2 11.2 L9 10.2 Z" fill="#d9608a"/><path d="M7.6 13.6 L10.3 10.9 L13.2 13.6 Z" fill="#1fa8f2"/></svg>
<div style="position:absolute;left:692.00px;top:56.34px;font-family:'Liberation Sans',sans-serif;font-size:11.0px;line-height:12.64px;color:#bbbbbb;white-space:pre;letter-spacing:-0.339px;-webkit-text-stroke:0.1px #bbbbbb;">CustomExpandableListAdapter.kt</div>
<svg style="position:absolute;left:851.0px;top:58px" width="7" height="7" viewBox="0 0 7 7"><path d="M0.5 0.5 L6.5 6.5 M6.5 0.5 L0.5 6.5" stroke="#6e7173" stroke-width="1"/></svg>
<div style="position:absolute;left:222px;top:73.5px;width:55px;height:690.5px;background:#313335;"></div>
<div style="position:absolute;left:278px;top:73.5px;width:746px;height:690.5px;background:#2b2b2b;"></div>
<div style="position:absolute;left:276.3px;top:73.5px;width:1.6px;height:690.5px;background:#4b4d4f;"></div>
<div style="position:absolute;left:975px;top:73.5px;width:1px;height:690.5px;background:#3c3e40;"></div>
<div style="position:absolute;left:308.7px;top:127.5px;width:1px;height:400.6px;background:#393b3d;"></div>
<div style="position:absolute;left:336.5px;top:273.2px;width:1px;height:218.5px;background:#393b3d;"></div>
<div style="position:absolute;left:364.2px;top:309.6px;width:1px;height:163.9px;background:#393b3d;"></div>
<div style="position:absolute;left:392.0px;top:327.8px;width:1px;height:36.4px;background:#393b3d;"></div>
<div style="position:absolute;left:392.0px;top:382.5px;width:1px;height:54.6px;background:#393b3d;"></div>
<div style="position:absolute;left:419.7px;top:418.9px;width:1px;height:18.2px;background:#393b3d;"></div>
<div style="position:absolute;left:308.7px;top:582.8px;width:1px;height:181.2px;background:#393b3d;"></div>
<div style="position:absolute;left:336.5px;top:692.0px;width:1px;height:72.0px;background:#393b3d;"></div>
<div style="position:absolute;left:364.2px;top:728.5px;width:1px;height:35.5px;background:#393b3d;"></div>
<div style="position:absolute;left:222px;top:72.56px;width:22.8px;text-align:right;font-family:'Liberation Mono',monospace;font-size:11.0px;line-height:18.21px;color:#606366;white-space:pre;letter-spacing:-0.25px">247</div>
<div style="position:absolute;left:281.3px;top:72.79px;font-family:'Liberation Mono',monospace;font-size:12.0px;letter-spacing:-0.2651px;line-height:18.21px;white-space:pre;height:18.21px"><span style="color:#a9b7c6">    }</span></div>
<div style="position:absolute;left:222px;top:90.77px;width:22.8px;text-align:right;font-family:'Liberation Mono',monospace;font-size:11.0px;line-height:18.21px;color:#606366;white-space:pre;letter-spacing:-0.25px">248</div>
<div style="position:absolute;left:222px;top:108.98px;width:22.8px;text-align:right;font-family:'Liberation Mono',monospace;font-size:11.0px;line-height:18.21px;color:#606366;white-space:pre;letter-spacing:-0.25px">249</div>
<div style="position:absolute;left:281.3px;top:109.21px;font-family:'Liberation Mono',monospace;font-size:12.0px;letter-spacing:-0.2651px;line-height:18.21px;white-space:pre;height:18.21px"><span style="color:#cc7832">    private fun </span><span style="color:#ffc66d">loadLikelihoods</span><span style="color:#a9b7c6">(): ArrayList&lt;Likelihoods&gt; {</span></div>
<div style="position:absolute;left:281.3px;top:127.42px;font-family:'Liberation Mono',monospace;font-size:12.0px;letter-spacing:-0.2651px;line-height:18.21px;white-space:pre;height:18.21px"><span style="color:#a9b7c6">        </span><span style="color:#cc7832">val </span><span style="color:#a9b7c6">weightings = ArrayList&lt;Likelihoods&gt;()</span></div>
<div style="position:absolute;left:222px;top:145.40px;width:22.8px;text-align:right;font-family:'Liberation Mono',monospace;font-size:11.0px;line-height:18.21px;color:#606366;white-space:pre;letter-spacing:-0.25px">251</div>
<div style="position:absolute;left:281.3px;top:145.63px;font-family:'Liberation Mono',monospace;font-size:12.0px;letter-spacing:-0.2651px;line-height:18.21px;white-space:pre;height:18.21px"><span style="color:#a9b7c6">        </span><span style="color:#cc7832">val </span><span style="color:#a9b7c6">inputStream: InputStream = </span><span style="color:#9876aa;font-style:italic">resources</span><span style="color:#a9b7c6">.openRawResource(R.raw.</span><span style="color:#9876aa;font-style:italic">likelihoods</span><span style="color:#a9b7c6">)</span></div>
<div style="position:absolute;left:222px;top:163.61px;width:22.8px;text-align:right;font-family:'Liberation Mono',monospace;font-size:11.0px;line-height:18.21px;color:#606366;white-space:pre;letter-spacing:-0.25px">252</div>
<div style="position:absolute;left:281.3px;top:163.84px;font-family:'Liberation Mono',monospace;font-size:12.0px;letter-spacing:-0.2651px;line-height:18.21px;white-space:pre;height:18.21px"><span style="color:#a9b7c6">        </span><span style="color:#cc7832">val </span><span style="color:#a9b7c6">reader = BufferedReader(InputStreamReader(inputStream</span><span style="color:#cc7832">,</span><span style="color:#a9b7c6"> Charset.forName(</span><span style="display:inline-block;width:75.0px;height:18.21px;vertical-align:top;position:relative"><span style="position:absolute;left:2.5px;top:1.86px;width:71.5px;height:13.5px;background:#3b3b3b;border-radius:3px;font-family:'Liberation Sans',sans-serif;font-size:10px;line-height:13.5px;color:#767676;text-align:center;font-style:normal;font-weight:normal;text-decoration:none;letter-spacing:0">charsetName:</span></span><span style="color:#6a8759">&quot;UTF-8&quot;</span><span style="color:#a9b7c6">)))</span></div>
<div style="position:absolute;left:222px;top:181.82px;width:22.8px;text-align:right;font-family:'Liberation Mono',monospace;font-size:11.0px;line-height:18.21px;color:#606366;white-space:pre;letter-spacing:-0.25px">253</div>
<div style="position:absolute;left:222px;top:200.03px;width:22.8px;text-align:right;font-family:'Liberation Mono',monospace;font-size:11.0px;line-height:18.21px;color:#606366;white-space:pre;letter-spacing:-0.25px">254</div>
<div style="position:absolute;left:281.3px;top:200.26px;font-family:'Liberation Mono',monospace;font-size:12.0px;letter-spacing:-0.2651px;line-height:18.21px;white-space:pre;height:18.21px"><span style="color:#a9b7c6">        </span><span style="color:#cc7832">var </span><span style="color:#a9b7c6;text-decoration:underline;text-underline-offset:2px">cmVal</span><span style="color:#a9b7c6">: Double = -</span><span style="color:#6897bb">1.0</span></div>
<div style="position:absolute;left:222px;top:218.24px;width:22.8px;text-align:right;font-family:'Liberation Mono',monospace;font-size:11.0px;line-height:18.21px;color:#606366;white-space:pre;letter-spacing:-0.25px">255</div>
<div style="position:absolute;left:281.3px;top:218.47px;font-family:'Liberation Mono',monospace;font-size:12.0px;letter-spacing:-0.2651px;line-height:18.21px;white-space:pre;height:18.21px"><span style="color:#a9b7c6">        </span><span style="color:#cc7832">val </span><span style="color:#a9b7c6">cmArr = </span><span style="color:#a9b7c6;font-style:italic">arrayListOf</span><span style="color:#a9b7c6">&lt;Double&gt;()</span></div>
<div style="position:absolute;left:222px;top:236.45px;width:22.8px;text-align:right;font-family:'Liberation Mono',monospace;font-size:11.0px;line-height:18.21px;color:#606366;white-space:pre;letter-spacing:-0.25px">256</div>
<div style="position:absolute;left:222px;top:254.66px;width:22.8px;text-align:right;font-family:'Liberation Mono',monospace;font-size:11.0px;line-height:18.21px;color:#606366;white-space:pre;letter-spacing:-0.25px">257</div>
<div style="position:absolute;left:281.3px;top:254.89px;font-family:'Liberation Mono',monospace;font-size:12.0px;letter-spacing:-0.2651px;line-height:18.21px;white-space:pre;height:18.21px"><span style="color:#a9b7c6">        reader.</span><span style="color:#ffc66d;font-style:italic">readLines</span><span style="color:#a9b7c6">().</span><span style="color:#ffc66d;font-style:italic">forEach</span><span style="color:#a9b7c6"> { </span><span style="display:inline-block;width:52.0px;height:18.21px;vertical-align:top;position:relative"><span style="position:absolute;left:2.5px;top:1.86px;width:48.5px;height:13.5px;background:#3b3b3b;border-radius:3px;font-family:'Liberation Sans',sans-serif;font-size:10px;line-height:13.5px;color:#767676;text-align:center;font-style:normal;font-weight:normal;text-decoration:none;letter-spacing:0">it: String</span></span></div>
<div style="position:absolute;left:222px;top:272.87px;width:22.8px;text-align:right;font-family:'Liberation Mono',monospace;font-size:11.0px;line-height:18.21px;color:#606366;white-space:pre;letter-spacing:-0.25px">258</div>
<div style="position:absolute;left:281.3px;top:273.10px;font-family:'Liberation Mono',monospace;font-size:12.0px;letter-spacing:-0.2651px;line-height:18.21px;white-space:pre;height:18.21px"><span style="color:#a9b7c6">            </span><span style="color:#cc7832">val </span><span style="color:#a9b7c6">items = </span><span style="color:#a9b7c6;font-weight:bold">it</span><span style="color:#a9b7c6">.</span><span style="color:#ffc66d;font-style:italic">split</span><span style="color:#a9b7c6">(</span><span style="display:inline-block;width:67.3px;height:18.21px;vertical-align:top;position:relative"><span style="position:absolute;left:2.5px;top:1.86px;width:63.8px;height:13.5px;background:#3b3b3b;border-radius:3px;font-family:'Liberation Sans',sans-serif;font-size:10px;line-height:13.5px;color:#767676;text-align:center;font-style:normal;font-weight:normal;text-decoration:none;letter-spacing:0">…delimiters:</span></span><span style="color:#6a8759">&quot;,&quot;</span><span style="color:#a9b7c6">)</span></div>
<div style="position:absolute;left:222px;top:291.08px;width:22.8px;text-align:right;font-family:'Liberation Mono',monospace;font-size:11.0px;line-height:18.21px;color:#606366;white-space:pre;letter-spacing:-0.25px">259</div>
<div style="position:absolute;left:281.3px;top:291.31px;font-family:'Liberation Mono',monospace;font-size:12.0px;letter-spacing:-0.2651px;line-height:18.21px;white-space:pre;height:18.21px"><span style="color:#a9b7c6">            </span><span style="color:#cc7832">for </span><span style="color:#a9b7c6">((index</span><span style="color:#cc7832">,</span><span style="color:#a9b7c6"> item) </span><span style="color:#cc7832">in </span><span style="color:#a9b7c6">items.</span><span style="color:#ffc66d;font-style:italic">withIndex</span><span style="color:#a9b7c6">()) {</span></div>
<div style="position:absolute;left:222px;top:309.29px;width:22.8px;text-align:right;font-family:'Liberation Mono',monospace;font-size:11.0px;line-height:18.21px;color:#606366;white-space:pre;letter-spacing:-0.25px">260</div>
<div style="position:absolute;left:281.3px;top:309.52px;font-family:'Liberation Mono',monospace;font-size:12.0px;letter-spacing:-0.2651px;line-height:18.21px;white-space:pre;height:18.21px"><span style="color:#a9b7c6">                </span><span style="color:#cc7832">if </span><span style="color:#a9b7c6">(index == </span><span style="color:#6897bb">0</span><span style="color:#a9b7c6">) {</span></div>
<div style="position:absolute;left:222px;top:327.50px;width:22.8px;text-align:right;font-family:'Liberation Mono',monospace;font-size:11.0px;line-height:18.21px;color:#606366;white-space:pre;letter-spacing:-0.25px">261</div>
<div style="position:absolute;left:281.3px;top:327.73px;font-family:'Liberation Mono',monospace;font-size:12.0px;letter-spacing:-0.2651px;line-height:18.21px;white-space:pre;height:18.21px"><span style="color:#a9b7c6">                    </span><span style="color:#a9b7c6;text-decoration:underline;text-underline-offset:2px">cmVal</span><span style="color:#a9b7c6"> = </span><span style="color:#9876aa">decFormat</span><span style="color:#a9b7c6">.parse(item)!!.toDouble()</span></div>
<div style="position:absolute;left:222px;top:345.71px;width:22.8px;text-align:right;font-family:'Liberation Mono',monospace;font-size:11.0px;line-height:18.21px;color:#606366;white-space:pre;letter-spacing:-0.25px">262</div>
<div style="position:absolute;left:281.3px;top:345.94px;font-family:'Liberation Mono',monospace;font-size:12.0px;letter-spacing:-0.2651px;line-height:18.21px;white-space:pre;height:18.21px"><span style="color:#a9b7c6">                    cmArr.clear()</span></div>
<div style="position:absolute;left:222px;top:363.92px;width:22.8px;text-align:right;font-family:'Liberation Mono',monospace;font-size:11.0px;line-height:18.21px;color:#606366;white-space:pre;letter-spacing:-0.25px">263</div>
<div style="position:absolute;left:281.3px;top:364.15px;font-family:'Liberation Mono',monospace;font-size:12.0px;letter-spacing:-0.2651px;line-height:18.21px;white-space:pre;height:18.21px"><span style="color:#a9b7c6">                } </span><span style="color:#cc7832">else </span><span style="color:#a9b7c6">{</span></div>
<div style="position:absolute;left:222px;top:382.13px;width:22.8px;text-align:right;font-family:'Liberation Mono',monospace;font-size:11.0px;line-height:18.21px;color:#606366;white-space:pre;letter-spacing:-0.25px">264</div>
<div style="position:absolute;left:281.3px;top:382.36px;font-family:'Liberation Mono',monospace;font-size:12.0px;letter-spacing:-0.2651px;line-height:18.21px;white-space:pre;height:18.21px"><span style="color:#a9b7c6">                    cmArr.add(</span><span style="color:#9876aa">decFormat</span><span style="color:#a9b7c6">.parse(item)!!.toDouble())</span></div>
<div style="position:absolute;left:222px;top:400.34px;width:22.8px;text-align:right;font-family:'Liberation Mono',monospace;font-size:11.0px;line-height:18.21px;color:#606366;white-space:pre;letter-spacing:-0.25px">265</div>
<div style="position:absolute;left:281.3px;top:400.57px;font-family:'Liberation Mono',monospace;font-size:12.0px;letter-spacing:-0.2651px;line-height:18.21px;white-space:pre;height:18.21px"><span style="color:#a9b7c6">                    </span><span style="color:#cc7832">if </span><span style="color:#a9b7c6">(index == items.</span><span style="color:#9876aa">size</span><span style="color:#a9b7c6"> - </span><span style="color:#6897bb">1</span><span style="color:#a9b7c6">) {</span></div>
<div style="position:absolute;left:222px;top:418.55px;width:22.8px;text-align:right;font-family:'Liberation Mono',monospace;font-size:11.0px;line-height:18.21px;color:#606366;white-space:pre;letter-spacing:-0.25px">266</div>
<div style="position:absolute;left:281.3px;top:418.78px;font-family:'Liberation Mono',monospace;font-size:12.0px;letter-spacing:-0.2651px;line-height:18.21px;white-space:pre;height:18.21px"><span style="color:#a9b7c6">                        weightings.add(Likelihoods(</span><span style="color:#a9b7c6;text-decoration:underline;text-underline-offset:2px">cmVal</span><span style="color:#cc7832">,</span><span style="color:#a9b7c6"> cmArr.</span><span style="color:#ffc66d;font-style:italic">toDoubleArray</span><span style="color:#a9b7c6">()))</span></div>
<div style="position:absolute;left:222px;top:436.76px;width:22.8px;text-align:right;font-family:'Liberation Mono',monospace;font-size:11.0px;line-height:18.21px;color:#606366;white-space:pre;letter-spacing:-0.25px">267</div>
<div style="position:absolute;left:281.3px;top:436.99px;font-family:'Liberation Mono',monospace;font-size:12.0px;letter-spacing:-0.2651px;line-height:18.21px;white-space:pre;height:18.21px"><span style="color:#a9b7c6">                    }</span></div>
<div style="position:absolute;left:222px;top:454.97px;width:22.8px;text-align:right;font-family:'Liberation Mono',monospace;font-size:11.0px;line-height:18.21px;color:#606366;white-space:pre;letter-spacing:-0.25px">268</div>
<div style="position:absolute;left:281.3px;top:455.20px;font-family:'Liberation Mono',monospace;font-size:12.0px;letter-spacing:-0.2651px;line-height:18.21px;white-space:pre;height:18.21px"><span style="color:#a9b7c6">                }</span></div>
<div style="position:absolute;left:222px;top:473.18px;width:22.8px;text-align:right;font-family:'Liberation Mono',monospace;font-size:11.0px;line-height:18.21px;color:#606366;white-space:pre;letter-spacing:-0.25px">269</div>
<div style="position:absolute;left:281.3px;top:473.41px;font-family:'Liberation Mono',monospace;font-size:12.0px;letter-spacing:-0.2651px;line-height:18.21px;white-space:pre;height:18.21px"><span style="color:#a9b7c6">            }</span></div>
<div style="position:absolute;left:222px;top:491.39px;width:22.8px;text-align:right;font-family:'Liberation Mono',monospace;font-size:11.0px;line-height:18.21px;color:#606366;white-space:pre;letter-spacing:-0.25px">270</div>
<div style="position:absolute;left:281.3px;top:491.62px;font-family:'Liberation Mono',monospace;font-size:12.0px;letter-spacing:-0.2651px;line-height:18.21px;white-space:pre;height:18.21px"><span style="color:#a9b7c6">        }</span></div>
<div style="position:absolute;left:222px;top:509.60px;width:22.8px;text-align:right;font-family:'Liberation Mono',monospace;font-size:11.0px;line-height:18.21px;color:#606366;white-space:pre;letter-spacing:-0.25px">271</div>
<div style="position:absolute;left:281.3px;top:509.83px;font-family:'Liberation Mono',monospace;font-size:12.0px;letter-spacing:-0.2651px;line-height:18.21px;white-space:pre;height:18.21px"><span style="color:#a9b7c6">        </span><span style="color:#cc7832">return </span><span style="color:#a9b7c6">weightings</span></div>
<div style="position:absolute;left:222px;top:527.81px;width:22.8px;text-align:right;font-family:'Liberation Mono',monospace;font-size:11.0px;line-height:18.21px;color:#606366;white-space:pre;letter-spacing:-0.25px">272</div>
<div style="position:absolute;left:281.3px;top:528.04px;font-family:'Liberation Mono',monospace;font-size:12.0px;letter-spacing:-0.2651px;line-height:18.21px;white-space:pre;height:18.21px"><span style="color:#a9b7c6">    }</span></div>
<div style="position:absolute;left:222px;top:546.02px;width:22.8px;text-align:right;font-family:'Liberation Mono',monospace;font-size:11.0px;line-height:18.21px;color:#606366;white-space:pre;letter-spacing:-0.25px">273</div>
<div style="position:absolute;left:222px;top:564.23px;width:22.8px;text-align:right;font-family:'Liberation Mono',monospace;font-size:11.0px;line-height:18.21px;color:#606366;white-space:pre;letter-spacing:-0.25px">274</div>
<div style="position:absolute;left:281.3px;top:564.46px;font-family:'Liberation Mono',monospace;font-size:12.0px;letter-spacing:-0.2651px;line-height:18.21px;white-space:pre;height:18.21px"><span style="color:#cc7832">    private fun </span><span style="color:#ffc66d">getAdjacentLikelihoods</span><span style="color:#a9b7c6">(inCM: Double): DoubleArray {</span></div>
<div style="position:absolute;left:222px;top:582.44px;width:22.8px;text-align:right;font-family:'Liberation Mono',monospace;font-size:11.0px;line-height:18.21px;color:#606366;white-space:pre;letter-spacing:-0.25px">275</div>
<div style="position:absolute;left:281.3px;top:582.67px;font-family:'Liberation Mono',monospace;font-size:12.0px;letter-spacing:-0.2651px;line-height:18.21px;white-space:pre;height:18.21px"><span style="color:#a9b7c6">        </span><span style="color:#cc7832">val </span><span style="color:#a9b7c6">firstLast = DoubleArray(</span><span style="display:inline-block;width:30.4px;height:18.21px;vertical-align:top;position:relative"><span style="position:absolute;left:2.5px;top:1.86px;width:26.9px;height:13.5px;background:#3b3b3b;border-radius:3px;font-family:'Liberation Sans',sans-serif;font-size:10px;line-height:13.5px;color:#767676;text-align:center;font-style:normal;font-weight:normal;text-decoration:none;letter-spacing:0">size:</span></span><span style="color:#6897bb">2</span><span style="color:#a9b7c6">)    </span><span style="color:#808080">// ind 0 = first   ind 1 = last</span></div>
<div style="position:absolute;left:222px;top:600.65px;width:22.8px;text-align:right;font-family:'Liberation Mono',monospace;font-size:11.0px;line-height:18.21px;color:#606366;white-space:pre;letter-spacing:-0.25px">276</div>
<div style="position:absolute;left:222px;top:618.86px;width:22.8px;text-align:right;font-family:'Liberation Mono',monospace;font-size:11.0px;line-height:18.21px;color:#606366;white-space:pre;letter-spacing:-0.25px">277</div>
<div style="position:absolute;left:281.3px;top:619.09px;font-family:'Liberation Mono',monospace;font-size:12.0px;letter-spacing:-0.2651px;line-height:18.21px;white-space:pre;height:18.21px"><span style="color:#a9b7c6">        firstLast[</span><span style="color:#6897bb">0</span><span style="color:#a9b7c6">] = </span><span style="color:#9876aa;text-decoration:underline;text-underline-offset:2px">likelihoods</span><span style="color:#a9b7c6">[</span><span style="color:#6897bb">0</span><span style="color:#a9b7c6">].</span><span style="color:#9876aa">cmBasis</span></div>
<div style="position:absolute;left:222px;top:637.07px;width:22.8px;text-align:right;font-family:'Liberation Mono',monospace;font-size:11.0px;line-height:18.21px;color:#606366;white-space:pre;letter-spacing:-0.25px">278</div>
<div style="position:absolute;left:222px;top:655.28px;width:22.8px;text-align:right;font-family:'Liberation Mono',monospace;font-size:11.0px;line-height:18.21px;color:#606366;white-space:pre;letter-spacing:-0.25px">279</div>
<div style="position:absolute;left:281.3px;top:655.51px;font-family:'Liberation Mono',monospace;font-size:12.0px;letter-spacing:-0.2651px;line-height:18.21px;white-space:pre;height:18.21px"><span style="color:#a9b7c6">        </span><span style="color:#cc7832">var </span><span style="color:#a9b7c6;text-decoration:underline;text-underline-offset:2px">diff</span><span style="color:#a9b7c6"> = </span><span style="color:#a9b7c6;font-style:italic">abs</span><span style="color:#a9b7c6">(</span><span style="display:inline-block;width:20.2px;height:18.21px;vertical-align:top;position:relative"><span style="position:absolute;left:2.5px;top:1.86px;width:16.7px;height:13.5px;background:#3b3b3b;border-radius:3px;font-family:'Liberation Sans',sans-serif;font-size:10px;line-height:13.5px;color:#767676;text-align:center;font-style:normal;font-weight:normal;text-decoration:none;letter-spacing:0">x:</span></span><span style="color:#a9b7c6">inCM - firstLast[</span><span style="color:#6897bb">0</span><span style="color:#a9b7c6">])</span></div>
<div style="position:absolute;left:222px;top:673.49px;width:22.8px;text-align:right;font-family:'Liberation Mono',monospace;font-size:11.0px;line-height:18.21px;color:#606366;white-space:pre;letter-spacing:-0.25px">280</div>
<div style="position:absolute;left:281.3px;top:673.72px;font-family:'Liberation Mono',monospace;font-size:12.0px;letter-spacing:-0.2651px;line-height:18.21px;white-space:pre;height:18.21px"><span style="color:#a9b7c6">        </span><span style="color:#cc7832">for </span><span style="color:#a9b7c6">(i </span><span style="color:#cc7832">in </span><span style="color:#6897bb">0</span><span style="color:#a9b7c6"> </span><span style="color:#ffc66d;font-style:italic">until</span><span style="color:#a9b7c6"> </span><span style="color:#9876aa;text-decoration:underline;text-underline-offset:2px">likelihoods</span><span style="color:#a9b7c6">.</span><span style="color:#9876aa">size</span><span style="color:#a9b7c6">) {</span></div>
<div style="position:absolute;left:222px;top:691.70px;width:22.8px;text-align:right;font-family:'Liberation Mono',monospace;font-size:11.0px;line-height:18.21px;color:#606366;white-space:pre;letter-spacing:-0.25px">281</div>
<div style="position:absolute;left:281.3px;top:691.93px;font-family:'Liberation Mono',monospace;font-size:12.0px;letter-spacing:-0.2651px;line-height:18.21px;white-space:pre;height:18.21px"><span style="color:#a9b7c6">            </span><span style="color:#cc7832">val </span><span style="color:#a9b7c6">newDiff = </span><span style="color:#a9b7c6;font-style:italic">abs</span><span style="color:#a9b7c6">(</span><span style="display:inline-block;width:20.2px;height:18.21px;vertical-align:top;position:relative"><span style="position:absolute;left:2.5px;top:1.86px;width:16.7px;height:13.5px;background:#3b3b3b;border-radius:3px;font-family:'Liberation Sans',sans-serif;font-size:10px;line-height:13.5px;color:#767676;text-align:center;font-style:normal;font-weight:normal;text-decoration:none;letter-spacing:0">x:</span></span><span style="color:#a9b7c6">inCM - </span><span style="color:#9876aa;text-decoration:underline;text-underline-offset:2px">likelihoods</span><span style="color:#a9b7c6">[i].</span><span style="color:#9876aa">cmBasis</span><span style="color:#a9b7c6">)</span></div>
<div style="position:absolute;left:222px;top:709.91px;width:22.8px;text-align:right;font-family:'Liberation Mono',monospace;font-size:11.0px;line-height:18.21px;color:#606366;white-space:pre;letter-spacing:-0.25px">282</div>
<div style="position:absolute;left:281.3px;top:710.14px;font-family:'Liberation Mono',monospace;font-size:12.0px;letter-spacing:-0.2651px;line-height:18.21px;white-space:pre;height:18.21px"><span style="color:#a9b7c6">            </span><span style="color:#cc7832">if </span><span style="color:#a9b7c6">(newDiff &lt;= </span><span style="color:#a9b7c6;text-decoration:underline;text-underline-offset:2px">diff</span><span style="color:#a9b7c6">) {</span></div>
<div style="position:absolute;left:222px;top:728.12px;width:22.8px;text-align:right;font-family:'Liberation Mono',monospace;font-size:11.0px;line-height:18.21px;color:#606366;white-space:pre;letter-spacing:-0.25px">283</div>
<div style="position:absolute;left:281.3px;top:728.35px;font-family:'Liberation Mono',monospace;font-size:12.0px;letter-spacing:-0.2651px;line-height:18.21px;white-space:pre;height:18.21px"><span style="color:#a9b7c6">                </span><span style="color:#a9b7c6;text-decoration:underline;text-underline-offset:2px">diff</span><span style="color:#a9b7c6"> = newDiff</span></div>
<div style="position:absolute;left:222px;top:746.33px;width:22.8px;text-align:right;font-family:'Liberation Mono',monospace;font-size:11.0px;line-height:18.21px;color:#606366;white-space:pre;letter-spacing:-0.25px">284</div>
<div style="position:absolute;left:281.3px;top:746.56px;font-family:'Liberation Mono',monospace;font-size:12.0px;letter-spacing:-0.2651px;line-height:18.21px;white-space:pre;height:18.21px"><span style="color:#a9b7c6">                firstLast[</span><span style="color:#6897bb">0</span><span style="color:#a9b7c6">] = </span><span style="color:#6897bb">0.0</span></div>
<svg style="position:absolute;left:272.6px;top:77.9px" width="9" height="9" viewBox="0 0 9 9"><path d="M0.6 8.4 H8.4 V3.4 L4.5 0.4 L0.6 3.4 Z" fill="#313335" stroke="#5c5f61" stroke-width="1"/><rect x="2.5" y="4.4" width="4" height="1.2" fill="#85888a"/></svg>
<svg style="position:absolute;left:272.6px;top:114.3px" width="9" height="9" viewBox="0 0 9 9"><path d="M0.6 0.6 H8.4 V5.6 L4.5 8.6 L0.6 5.6 Z" fill="#313335" stroke="#5c5f61" stroke-width="1"/><rect x="2.5" y="3.2" width="4" height="1.2" fill="#85888a"/></svg>
<svg style="position:absolute;left:272.6px;top:260.0px" width="9" height="9" viewBox="0 0 9 9"><path d="M0.6 0.6 H8.4 V5.6 L4.5 8.6 L0.6 5.6 Z" fill="#313335" stroke="#5c5f61" stroke-width="1"/><rect x="2.5" y="3.2" width="4" height="1.2" fill="#85888a"/></svg>
<svg style="position:absolute;left:272.6px;top:296.4px" width="9" height="9" viewBox="0 0 9 9"><path d="M0.6 0.6 H8.4 V5.6 L4.5 8.6 L0.6 5.6 Z" fill="#313335" stroke="#5c5f61" stroke-width="1"/><rect x="2.5" y="3.2" width="4" height="1.2" fill="#85888a"/></svg>
<svg style="position:absolute;left:272.6px;top:314.6px" width="9" height="9" viewBox="0 0 9 9"><path d="M0.6 0.6 H8.4 V5.6 L4.5 8.6 L0.6 5.6 Z" fill="#313335" stroke="#5c5f61" stroke-width="1"/><rect x="2.5" y="3.2" width="4" height="1.2" fill="#85888a"/></svg>
<svg style="position:absolute;left:272.6px;top:369.3px" width="9" height="9" viewBox="0 0 9 9"><path d="M0.6 8.4 H8.4 V3.4 L4.5 0.4 L0.6 3.4 Z" fill="#313335" stroke="#5c5f61" stroke-width="1"/><rect x="2.5" y="4.4" width="4" height="1.2" fill="#85888a"/></svg>
<svg style="position:absolute;left:272.6px;top:405.7px" width="9" height="9" viewBox="0 0 9 9"><path d="M0.6 0.6 H8.4 V5.6 L4.5 8.6 L0.6 5.6 Z" fill="#313335" stroke="#5c5f61" stroke-width="1"/><rect x="2.5" y="3.2" width="4" height="1.2" fill="#85888a"/></svg>
<svg style="position:absolute;left:272.6px;top:442.1px" width="9" height="9" viewBox="0 0 9 9"><path d="M0.6 8.4 H8.4 V3.4 L4.5 0.4 L0.6 3.4 Z" fill="#313335" stroke="#5c5f61" stroke-width="1"/><rect x="2.5" y="4.4" width="4" height="1.2" fill="#85888a"/></svg>
<svg style="position:absolute;left:272.6px;top:460.3px" width="9" height="9" viewBox="0 0 9 9"><path d="M0.6 8.4 H8.4 V3.4 L4.5 0.4 L0.6 3.4 Z" fill="#313335" stroke="#5c5f61" stroke-width="1"/><rect x="2.5" y="4.4" width="4" height="1.2" fill="#85888a"/></svg>
<svg style="position:absolute;left:272.6px;top:478.5px" width="9" height="9" viewBox="0 0 9 9"><path d="M0.6 8.4 H8.4 V3.4 L4.5 0.4 L0.6 3.4 Z" fill="#313335" stroke="#5c5f61" stroke-width="1"/><rect x="2.5" y="4.4" width="4" height="1.2" fill="#85888a"/></svg>
<svg style="position:absolute;left:272.6px;top:496.7px" width="9" height="9" viewBox="0 0 9 9"><path d="M0.6 8.4 H8.4 V3.4 L4.5 0.4 L0.6 3.4 Z" fill="#313335" stroke="#5c5f61" stroke-width="1"/><rect x="2.5" y="4.4" width="4" height="1.2" fill="#85888a"/></svg>
<svg style="position:absolute;left:272.6px;top:533.1px" width="9" height="9" viewBox="0 0 9 9"><path d="M0.6 8.4 H8.4 V3.4 L4.5 0.4 L0.6 3.4 Z" fill="#313335" stroke="#5c5f61" stroke-width="1"/><rect x="2.5" y="4.4" width="4" height="1.2" fill="#85888a"/></svg>
<svg style="position:absolute;left:272.6px;top:569.6px" width="9" height="9" viewBox="0 0 9 9"><path d="M0.6 0.6 H8.4 V5.6 L4.5 8.6 L0.6 5.6 Z" fill="#313335" stroke="#5c5f61" stroke-width="1"/><rect x="2.5" y="3.2" width="4" height="1.2" fill="#85888a"/></svg>
<svg style="position:absolute;left:272.6px;top:678.8px" width="9" height="9" viewBox="0 0 9 9"><path d="M0.6 0.6 H8.4 V5.6 L4.5 8.6 L0.6 5.6 Z" fill="#313335" stroke="#5c5f61" stroke-width="1"/><rect x="2.5" y="3.2" width="4" height="1.2" fill="#85888a"/></svg>
<svg style="position:absolute;left:272.6px;top:715.2px" width="9" height="9" viewBox="0 0 9 9"><path d="M0.6 0.6 H8.4 V5.6 L4.5 8.6 L0.6 5.6 Z" fill="#313335" stroke="#5c5f61" stroke-width="1"/><rect x="2.5" y="3.2" width="4" height="1.2" fill="#85888a"/></svg>
<div style="position:absolute;left:221px;top:127px;width:34px;height:17px;background:#3d4042;"></div>
<div style="position:absolute;left:221px;top:127px;width:34px;height:17px;overflow:hidden">
<div style="position:absolute;left:-133.40px;top:2.70px;font-family:'Liberation Sans',sans-serif;font-size:11.0px;line-height:12.64px;color:#bbbbbb;white-space:pre;letter-spacing:-0.287px;-webkit-text-stroke:0.1px #bbbbbb;">com.markvanpraet.dnarelationships</div>
</div>
<div style="position:absolute;left:19px;top:764px;width:1005px;height:1px;background:#323232;"></div>
<div style="position:absolute;left:19px;top:765px;width:1005px;height:22px;background:#3c3f41;"></div>
<div style="position:absolute;left:24.70px;top:770.84px;font-family:'Liberation Sans',sans-serif;font-size:11.0px;line-height:12.64px;color:#bbbbbb;white-space:pre;letter-spacing:-0.527px;-webkit-text-stroke:0.1px #bbbbbb;">Event Log</div>
<div style="position:absolute;left:19px;top:787px;width:1005px;height:0.6px;background:#323232;"></div>
<div style="position:absolute;left:44px;top:787.5px;width:980px;height:77px;background:#2b2b2b;"></div>
<svg style="position:absolute;left:25.5px;top:796px" width="12" height="11" viewBox="0 0 12 11"><rect x="0.6" y="1.6" width="9" height="9" fill="none" stroke="#5b5e60" stroke-width="1.1"/><path d="M2.5 5.5 L4.8 7.8 L11.3 0.8" fill="none" stroke="#5b5e60" stroke-width="1.3"/></svg>
<svg style="position:absolute;left:27px;top:817px" width="9" height="12" viewBox="0 0 9 12"><rect x="0" y="1" width="9" height="1.6" fill="#afb1b3"/><rect x="3" y="0" width="3" height="1.5" fill="#afb1b3"/><path d="M0.8 3.4 H8.2 L7.6 12 H1.4 Z" fill="#afb1b3"/></svg>
<div style="position:absolute;left:22px;top:838px;width:18px;height:1px;background:#4b4e50;"></div>
<svg style="position:absolute;left:28px;top:853px" width="8" height="6" viewBox="0 0 8 6"><path d="M0.5 0.5 L3 3 L0.5 5.5 M4.5 0.5 L7 3 L4.5 5.5" fill="none" stroke="#9a9da0" stroke-width="1"/></svg>
<div style="position:absolute;left:44px;top:787.5px;width:980px;height:77px;overflow:hidden">
<div style="position:absolute;left:4.00px;top:-6.16px;font-family:'Liberation Sans',sans-serif;font-size:11.0px;line-height:12.64px;color:#bbbbbb;white-space:pre;letter-spacing:-0.645px;-webkit-text-stroke:0.1px #bbbbbb;">2021-05-11</div>
<div style="position:absolute;left:4.00px;top:10.75px;font-family:'Liberation Sans',sans-serif;font-size:11.0px;line-height:12.64px;color:#bbbbbb;white-space:pre;letter-spacing:-0.507px;-webkit-text-stroke:0.1px #bbbbbb;">3:08 p.m.</div>
<div style="position:absolute;left:55.60px;top:10.75px;font-family:'Liberation Sans',sans-serif;font-size:11.0px;line-height:12.64px;color:#bbbbbb;white-space:pre;letter-spacing:-0.254px;-webkit-text-stroke:0.1px #bbbbbb;">* daemon not running; starting now at tcp:5037</div>
<div style="position:absolute;left:4.00px;top:45.34px;font-family:'Liberation Sans',sans-serif;font-size:11.0px;line-height:12.64px;color:#bbbbbb;white-space:pre;letter-spacing:-0.507px;-webkit-text-stroke:0.1px #bbbbbb;">3:08 p.m.</div>
<div style="position:absolute;left:55.60px;top:45.34px;font-family:'Liberation Sans',sans-serif;font-size:11.0px;line-height:12.64px;color:#bbbbbb;white-space:pre;letter-spacing:-0.370px;-webkit-text-stroke:0.1px #bbbbbb;">* daemon started successfully</div>
</div>
<div style="position:absolute;left:19px;top:864px;width:1005px;height:1px;background:#323232;"></div>
<div style="position:absolute;left:0px;top:865px;width:1024px;height:18.5px;background:#3c3f41;"></div>
<svg style="position:absolute;left:28.7px;top:870.5px" width="9" height="9" viewBox="0 0 9 9"><rect x="0" y="0.3" width="1.6" height="1.6" fill="#afb1b3"/><rect x="2.6" y="0.3" width="6.4" height="1.6" fill="#afb1b3"/><rect x="0" y="3.6" width="1.6" height="1.6" fill="#afb1b3"/><rect x="2.6" y="3.6" width="6.4" height="1.6" fill="#afb1b3"/><rect x="0" y="6.9" width="1.6" height="1.6" fill="#afb1b3"/><rect x="2.6" y="6.9" width="6.4" height="1.6" fill="#afb1b3"/></svg>
<div style="position:absolute;left:41.60px;top:869.84px;font-family:'Liberation Sans',sans-serif;font-size:11.0px;line-height:12.64px;color:#bbbbbb;white-space:pre;letter-spacing:-0.919px;-webkit-text-stroke:0.1px #bbbbbb;">TODO</div>
<svg style="position:absolute;left:87.5px;top:869.5px" width="10" height="10" viewBox="0 0 10 10"><circle cx="5" cy="5" r="4.9" fill="#afb1b3"/><rect x="4.3" y="2" width="1.4" height="3.8" fill="#3c3f41"/><rect x="4.3" y="6.6" width="1.4" height="1.4" fill="#3c3f41"/></svg>
<div style="position:absolute;left:101.20px;top:869.84px;font-family:'Liberation Sans',sans-serif;font-size:11.0px;line-height:12.64px;color:#bbbbbb;white-space:pre;letter-spacing:-0.672px;-webkit-text-stroke:0.1px #bbbbbb;"><u style="text-underline-offset:0.8px">6</u>: Problems</div>
<svg style="position:absolute;left:172px;top:870px" width="10" height="9" viewBox="0 0 10 9"><rect x="0" y="0" width="10" height="9" fill="#afb1b3"/><path d="M2 2.2 L4.3 4.3 L2 6.4" fill="none" stroke="#3c3f41" stroke-width="1.1"/><rect x="5" y="6" width="3" height="1" fill="#3c3f41"/></svg>
<div style="position:absolute;left:186.60px;top:869.84px;font-family:'Liberation Sans',sans-serif;font-size:11.0px;line-height:12.64px;color:#bbbbbb;white-space:pre;letter-spacing:-0.521px;-webkit-text-stroke:0.1px #bbbbbb;">Terminal</div>
<svg style="position:absolute;left:245px;top:868.5px" width="9.5" height="11" viewBox="0 0 9.5 11"><ellipse cx="4.75" cy="1.8" rx="4.5" ry="1.6" fill="#afb1b3"/><path d="M0.25 3.3 Q4.75 5.6 9.25 3.3 V4.9 Q4.75 7.2 0.25 4.9 Z M0.25 6.1 Q4.75 8.4 9.25 6.1 V7.7 Q4.75 10 0.25 7.7 Z M0.25 8.9 Q4.75 11.2 9.25 8.9 V9.4 Q4.75 11.4 0.25 9.4 Z" fill="#afb1b3"/></svg>
<div style="position:absolute;left:259.40px;top:869.84px;font-family:'Liberation Sans',sans-serif;font-size:11.0px;line-height:12.64px;color:#bbbbbb;white-space:pre;letter-spacing:-0.544px;-webkit-text-stroke:0.1px #bbbbbb;">Database Inspector</div>
<svg style="position:absolute;left:364.5px;top:871px" width="11" height="7" viewBox="0 0 11 7"><path d="M0.8 6.8 A4.7 4.7 0 0 1 10.2 6.8" fill="none" stroke="#afb1b3" stroke-width="1.6"/><path d="M5.5 6.5 L7.8 2.5" stroke="#afb1b3" stroke-width="1.4"/></svg>
<div style="position:absolute;left:380.30px;top:869.84px;font-family:'Liberation Sans',sans-serif;font-size:11.0px;line-height:12.64px;color:#bbbbbb;white-space:pre;letter-spacing:-0.443px;-webkit-text-stroke:0.1px #bbbbbb;">Profiler</div>
<svg style="position:absolute;left:430.3px;top:870.5px" width="9.5" height="8" viewBox="0 0 9.5 8"><rect x="0" y="0" width="9.5" height="1.5" fill="#afb1b3"/><rect x="0" y="3.2" width="6" height="1.5" fill="#afb1b3"/><rect x="0" y="6.4" width="8" height="1.5" fill="#afb1b3"/></svg>
<div style="position:absolute;left:445.00px;top:869.84px;font-family:'Liberation Sans',sans-serif;font-size:11.0px;line-height:12.64px;color:#bbbbbb;white-space:pre;letter-spacing:-0.671px;-webkit-text-stroke:0.1px #bbbbbb;">Logcat</div>
<div style="position:absolute;left:0px;top:883.5px;width:1024px;height:1px;background:#4a4b4d;"></div>
<div style="position:absolute;left:0px;top:884.5px;width:1024px;height:15.5px;background:#3c3f41;"></div>
<svg style="position:absolute;left:3px;top:886px" width="11" height="11" viewBox="0 0 11 11"><rect x="2.6" y="0.6" width="7.8" height="7.8" fill="none" stroke="#afb1b3" stroke-width="1.1"/><path d="M0.6 2.6 V10.4 H8.4" fill="none" stroke="#afb1b3" stroke-width="1.1"/></svg>
<div style="position:absolute;left:23.90px;top:886.84px;font-family:'Liberation Sans',sans-serif;font-size:11.0px;line-height:12.64px;color:#bbbbbb;white-space:pre;letter-spacing:-0.345px;-webkit-text-stroke:0.1px #bbbbbb;">* daemon started successfully (5 minutes ago)</div>
</div></body></html>
